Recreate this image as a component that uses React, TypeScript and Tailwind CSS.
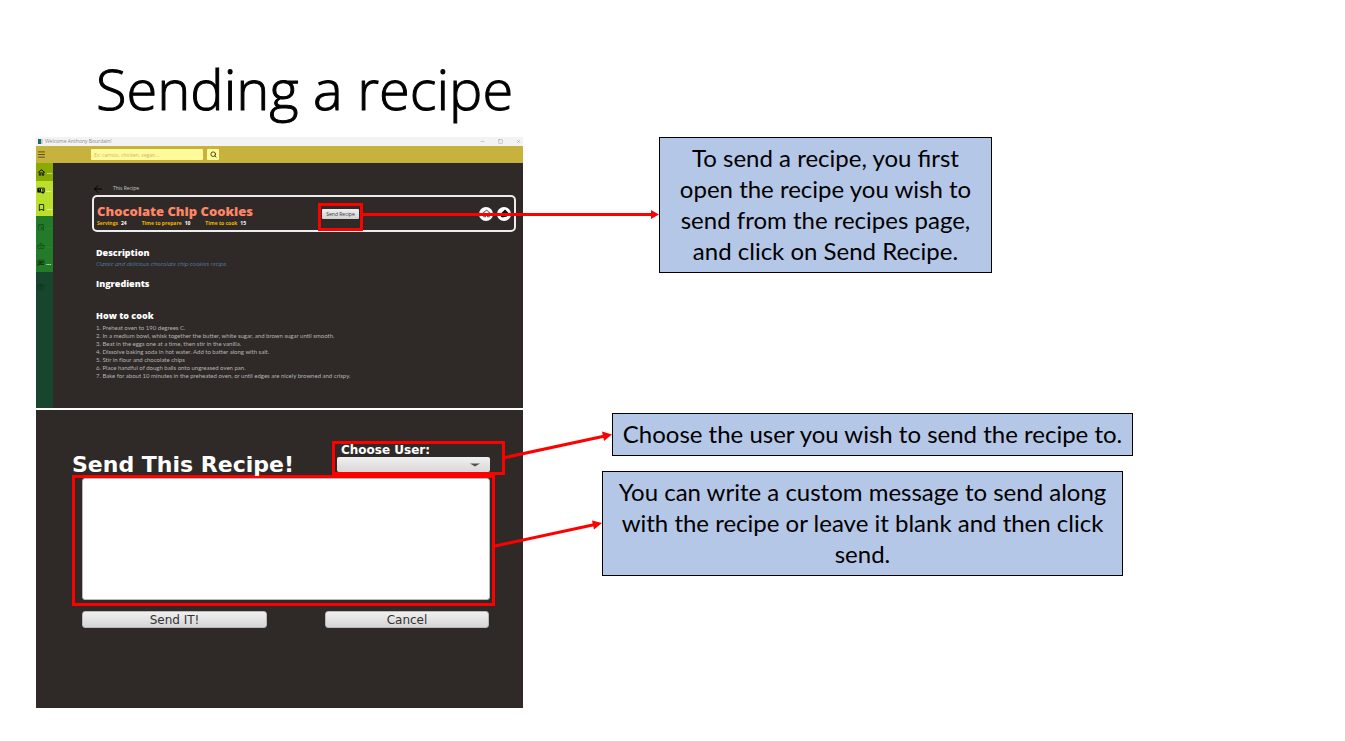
import React from "react";
import { ArrowLeft, Menu, Minus, Search, Square, X } from "lucide-react";
import {
  MdBookmarkBorder,
  MdHelpOutline,
  MdOutlineChat,
  MdOutlineEvent,
  MdOutlineHome,
  MdOutlineShoppingBasket,
} from "react-icons/md";

const steps = [
  "1. Preheat oven to 190 degrees C.",
  "2. In a medium bowl, whisk together the butter, white sugar, and brown sugar until smooth.",
  "3. Beat in the eggs one at a time, then stir in the vanilla.",
  "4. Dissolve baking soda in hot water. Add to batter along with salt.",
  "5. Stir in flour and chocolate chips",
  "6. Place handful of dough balls onto ungreased oven pan.",
  "7. Bake for about 10 minutes in the preheated oven, or until edges are nicely browned and crispy.",
];

const facts = [
  { label: "Servings", value: "24" },
  { label: "Time to prepare", value: "10" },
  { label: "Time to cook", value: "15" },
];

function RecipeCardIcon() {
  return (
    <svg viewBox="0 0 24 20" className="h-[7px] w-[8px]" fill="none" stroke="currentColor">
      <path d="M2 3 H22 V15 H2 Z" strokeWidth="2.5" />
      <path d="M3 4 H12 V14 H3 Z" fill="currentColor" stroke="none" />
      <path d="M15 7 H20 M15 11 H20" strokeWidth="2" />
      <path d="M15 14 V19 L17.500 17 L20 19 V14" fill="currentColor" strokeWidth="1" />
      <circle cx="7.500" cy="8" r="1.600" fill="#badf2c" stroke="none" />
    </svg>
  );
}

function EditIcon() {
  return (
    <svg viewBox="0 0 20 20" className="h-[10px] w-[10px]" fill="currentColor">
      <path d="M12 1 L19 8 L17 11 L16 15 L6 17 L3 14 L3 10 Z" />
    </svg>
  );
}

function NavItem({
  label,
  icon,
  dots = "text-white",
  className = "",
}: {
  label: string;
  icon: React.ReactNode;
  dots?: string;
  className?: string;
}) {
  return (
    <a
      href="#"
      aria-label={label}
      className={`flex items-center gap-px pl-px text-[6px] font-bold leading-none ${className}`}
    >
      {icon}
      <span className={dots}>...</span>
    </a>
  );
}

function Sidebar() {
  return (
    <nav className="flex w-[17px] shrink-0 flex-col bg-[#18452d] text-black">
      <NavItem label="Home" icon={<MdOutlineHome size={9} />} className="h-[18px] bg-[#8aab00]" />
      <div className="bg-[#badf2c]">
        <NavItem label="My recipes" icon={<RecipeCardIcon />} className="h-[18px]" />
        <NavItem label="Saved" icon={<MdBookmarkBorder size={9} />} className="h-[17px]" />
      </div>
      <div className="bg-[#237a28]">
        <NavItem
          label="Weekly plan"
          icon={<MdOutlineEvent size={8} className="text-[#125018]" />}
          dots="text-[#3d8a42]"
          className="h-[21px]"
        />
        <NavItem
          label="Shopping list"
          icon={<MdOutlineShoppingBasket size={8} className="text-[#125018]" />}
          dots="text-[#3d8a42]"
          className="h-[17px]"
        />
        <NavItem
          label="Messages"
          icon={<MdOutlineChat size={8} className="text-[#082c0c]" />}
          className="h-[18px]"
        />
      </div>
      <a href="#" aria-label="Help" className="flex h-[30px] items-center pl-px">
        <MdHelpOutline size={8} className="text-[#0d2e1c]" />
      </a>
    </nav>
  );
}

function RecipeWindow() {
  return (
    <section className="flex h-[271px] flex-col bg-[#2f2a28] font-['Open_Sans',sans-serif]">
      <div className="flex h-[9px] items-center justify-between bg-[#f3f3f3] px-[2px] text-[5px] leading-none text-[#8b8b8b]">
        <span className="flex items-center gap-[2px]">
          <span className="flex h-[5px] w-[5px] bg-gradient-to-r from-[#1d6b68] from-60% to-[#bcd3d2] to-60%" />
          Welcome Anthony Bourdain!
        </span>
        <span className="flex items-center gap-[13px]">
          <Minus size={5} />
          <Square size={5} />
          <X size={5} />
        </span>
      </div>
      <div className="flex h-[17px] items-center bg-[#c7b23e] pl-px">
        <button aria-label="Menu" className="w-[54px] text-[#3a3313]">
          <Menu size={9} />
        </button>
        <input
          aria-label="Search recipes"
          placeholder="Ex: carrots, chicken, vegan..."
          className="h-[11px] w-[112px] rounded-[1px] bg-[#fffb9d] px-[3px] text-[5px] placeholder:text-[#c3b876]"
        />
        <button
          aria-label="Search"
          className="ml-[4px] flex h-[11px] w-[12px] items-center justify-center rounded-[1px] bg-[#fffb9d] text-[#3a3313]"
        >
          <Search size={7} strokeWidth={3} />
        </button>
      </div>
      <div className="flex grow">
        <Sidebar />
        <div className="grow pl-[39px] pr-[7px] pt-[20px]">
          <div className="flex h-[12px] items-center gap-[9px] text-[5px] text-[#c9c7c6]">
            <ArrowLeft size={12} className="text-black" />
            This Recipe
          </div>
          <header className="flex h-[37px] justify-between rounded-[5px] border-2 border-[#ececec] pl-[3px] pr-[3px]">
            <div className="w-[221px] pt-[5px]">
              <h2 className="text-[13px] font-extrabold leading-[18px] text-[#ff8567]">
                Chocolate Chip Cookies
              </h2>
              <dl className="flex gap-[15px] text-[5px] font-bold leading-[6px]">
                {facts.map((f) => (
                  <div key={f.label} className="flex gap-[3px]">
                    <dt className="text-[#f0b400]">{f.label}</dt>
                    <dd className="text-white">{f.value}</dd>
                  </div>
                ))}
              </dl>
            </div>
            <div className="mr-auto mt-[6px] h-[28px] w-[45px] shrink-0 border-3 border-[#ff0000] px-px pt-[3px]">
              <button className="flex h-[10px] w-full items-center justify-center whitespace-nowrap rounded-[1px] bg-gradient-to-b from-[#efefef] to-[#d2d2d2] text-[5px] leading-none text-[#333333]">
                Send Recipe
              </button>
            </div>
            <div className="flex items-center gap-[4px] text-black">
              <button
                aria-label="Home"
                className="flex h-[14px] w-[14px] items-center justify-center rounded-full bg-white"
              >
                <MdOutlineHome size={11} className="text-[#555555]" />
              </button>
              <button
                aria-label="Edit"
                className="flex h-[14px] w-[14px] items-center justify-center rounded-full bg-white"
              >
                <EditIcon />
              </button>
            </div>
          </header>
          <div className="pl-[4px] pt-[15px] text-white">
            <h3 className="text-[9px] font-extrabold leading-[12px]">Description</h3>
            <p className="text-[6px] font-light italic leading-[10px] text-[#62a4da]">
              Classic and delicious chocolate chip cookies recipe.
            </p>
            <h3 className="mt-[9px] text-[9px] font-extrabold leading-[12px]">Ingredients</h3>
            <h3 className="mt-[20px] text-[9px] font-extrabold leading-[12px]">How to cook</h3>
            <ol className="mt-[2px] whitespace-nowrap font-['Lato',sans-serif] text-[6px] leading-[8px] text-[#b5b3b2] [font-variant-ligatures:none]">
              {steps.map((s) => (
                <li key={s}>{s}</li>
              ))}
            </ol>
          </div>
        </div>
      </div>
    </section>
  );
}

const grayButton =
  "h-[17px] rounded-[3px] border border-[#b9b9b9] bg-gradient-to-b from-[#f0f0f0] to-[#d6d6d6] text-[12px] leading-none text-[#333333]";

function SendDialog() {
  return (
    <section className="mt-[2px] h-[298px] bg-[#2f2a28] pl-[36px] pr-[18px] pt-[31px] font-['DejaVu_Sans',sans-serif]">
      <div className="flex items-end justify-between">
        <h2 className="whitespace-nowrap text-[22px] font-bold leading-[20px] text-white">
          Send This Recipe!
        </h2>
        <div className="flex h-[34px] w-[173px] flex-col border-3 border-[#ff0000] pl-[2px] pr-[12px]">
          <label
            htmlFor="user"
            className="whitespace-nowrap pl-[4px] text-[12px] font-bold leading-[13px] text-white"
          >
            Choose User:
          </label>
          <div className="relative">
            <select
              id="user"
              className="block h-[15px] w-full appearance-none rounded-[2px] bg-gradient-to-b from-[#f0f0f0] to-[#d8d8d8]"
            />
            <svg
              viewBox="0 0 10 4"
              className="pointer-events-none absolute right-[10px] top-[6px] h-[4px] w-[10px]"
            >
              <path d="M0 0.5 H10 L5 3.5 Z" fill="#505050" />
            </svg>
          </div>
        </div>
      </div>
      <div className="w-[423px] border-3 border-[#ff0000] pb-[3px] pl-[7px] pr-[2px]">
        <textarea
          aria-label="Message"
          className="block h-[122px] w-full resize-none rounded-[3px] border border-[#b9b9b9] bg-white"
        />
      </div>
      <div className="flex justify-between pl-[10px] pr-[16px] pt-[5px]">
        <button className={`${grayButton} w-[185px]`}>Send IT!</button>
        <button className={`${grayButton} w-[164px]`}>Cancel</button>
      </div>
    </section>
  );
}

function Callout({ className, children }: { className: string; children: React.ReactNode }) {
  return (
    <p
      className={`border border-black bg-[#b4c7e7] pb-[6px] pt-[4px] text-center text-[24px] leading-[31px] text-black ${className}`}
    >
      {children}
    </p>
  );
}

function Arrows() {
  return (
    <svg
      className="pointer-events-none absolute left-[36px] top-0 h-[571px] w-[640px]"
      viewBox="0 0 640 571"
      fill="#ff0000"
      stroke="#ff0000"
      strokeWidth="3"
    >
      <line x1="327" y1="77.5" x2="616" y2="77.5" />
      <path d="M615 73 L623 77.5 L615 82 Z" stroke="none" />
      <line x1="469" y1="320.5" x2="569" y2="299" />
      <path d="M566 294.5 L576 297.5 L568 304 Z" stroke="none" />
      <line x1="459" y1="409" x2="559" y2="387.5" />
      <path d="M556 383.5 L566 386 L558 392.5 Z" stroke="none" />
    </svg>
  );
}

export default function App() {
  return (
    <div className="min-h-screen bg-white pb-[33px] font-['Lato',sans-serif]">
      <h1 className="px-[96px] pb-[13px] pt-[52px] font-['Open_Sans',sans-serif] text-[56px] font-light leading-[72px] text-black [-webkit-text-stroke:1px_black]">
        Sending a recipe
      </h1>
      <main className="relative flex items-start pl-[36px]">
        <div className="w-[487px] shrink-0">
          <RecipeWindow />
          <SendDialog />
        </div>
        <div className="flex grow flex-col items-start pl-[79px]">
          <Callout className="ml-[57px] w-[333px] px-[10px]">
            To send a recipe, you first open the recipe you wish to send from the recipes page, and
            click on Send Recipe.
          </Callout>
          <Callout className="ml-[10px] mt-[140px] w-[521px]">
            Choose the user you wish to send the recipe to.
          </Callout>
          <Callout className="mt-[15px] w-[521px] px-[10px]">
            You can write a custom message to send along with the recipe or leave it blank and then
            click send.
          </Callout>
        </div>
        <Arrows />
      </main>
    </div>
  );
}
